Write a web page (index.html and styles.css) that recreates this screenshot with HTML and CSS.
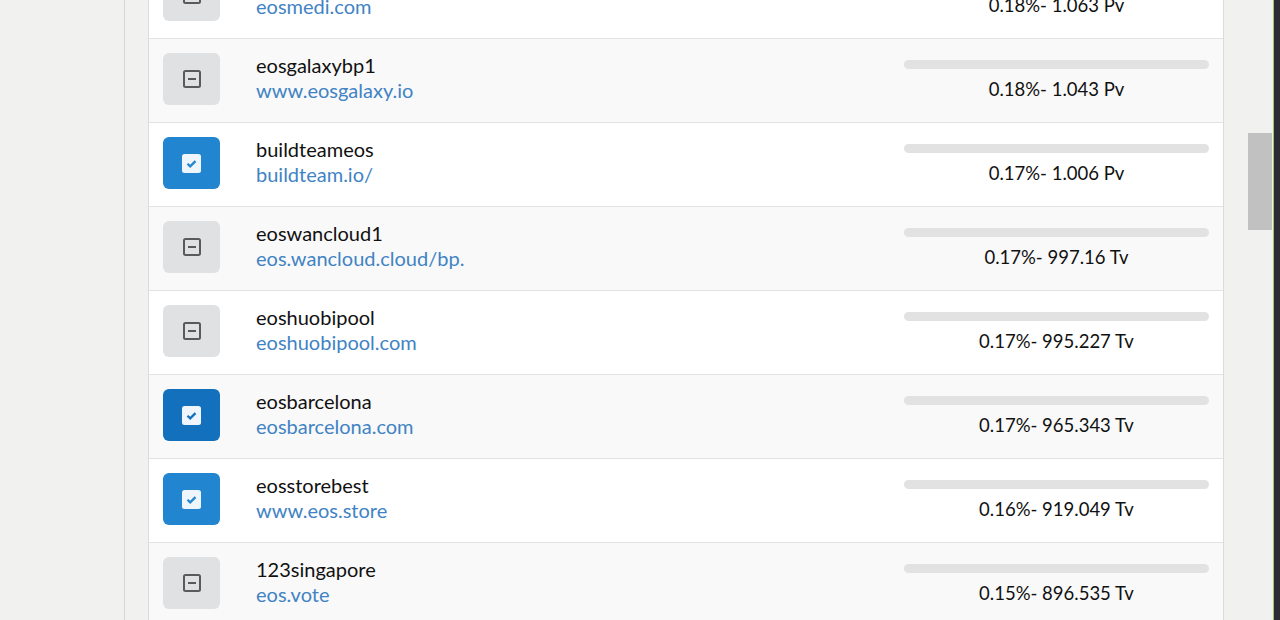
FILE: index.html
```html
<!DOCTYPE html>
<html lang="en">
<head>
  <meta charset="UTF-8">
  <title>Producers</title>
  <link rel="stylesheet" href="styles.css">
</head>
<body>

  <div class="sidebar"></div>

  <div class="main">
    <div class="table">
      <div class="row">
        <div class="cell-check"><div class="toggle off"><svg width="18" height="18" viewBox="0 0 18 18"><rect x="1" y="1" width="16" height="16" rx="1.5" fill="none" stroke="#5a5a5a" stroke-width="2"/><path d="M5 9h8" stroke="#5a5a5a" stroke-width="2"/></svg></div></div>
        <div class="cell-name"><div class="name">eosmedinodes</div><a class="url">eosmedi.com</a></div>
        <div class="cell-vote"><div class="bar"></div><div class="votes">0.18%- 1.063 Pv</div></div>
      </div>
      <div class="row">
        <div class="cell-check"><div class="toggle off"><svg width="18" height="18" viewBox="0 0 18 18"><rect x="1" y="1" width="16" height="16" rx="1.5" fill="none" stroke="#5a5a5a" stroke-width="2"/><path d="M5 9h8" stroke="#5a5a5a" stroke-width="2"/></svg></div></div>
        <div class="cell-name"><div class="name">eosgalaxybp1</div><a class="url">www.eosgalaxy.io</a></div>
        <div class="cell-vote"><div class="bar"></div><div class="votes">0.18%- 1.043 Pv</div></div>
      </div>
      <div class="row">
        <div class="cell-check"><div class="toggle on"><svg width="19" height="19" viewBox="0 0 19 19"><rect width="19" height="19" rx="2.5" fill="#eef5fc"/><path d="M5.5 9.8l2.7 2.6 5.3-5.3" stroke="#2185d0" stroke-width="2.2" fill="none"/></svg></div></div>
        <div class="cell-name"><div class="name">buildteameos</div><a class="url">buildteam.io/</a></div>
        <div class="cell-vote"><div class="bar"></div><div class="votes">0.17%- 1.006 Pv</div></div>
      </div>
      <div class="row">
        <div class="cell-check"><div class="toggle off"><svg width="18" height="18" viewBox="0 0 18 18"><rect x="1" y="1" width="16" height="16" rx="1.5" fill="none" stroke="#5a5a5a" stroke-width="2"/><path d="M5 9h8" stroke="#5a5a5a" stroke-width="2"/></svg></div></div>
        <div class="cell-name"><div class="name">eoswancloud1</div><a class="url">eos.wancloud.cloud/bp.</a></div>
        <div class="cell-vote"><div class="bar"></div><div class="votes">0.17%- 997.16 Tv</div></div>
      </div>
      <div class="row">
        <div class="cell-check"><div class="toggle off"><svg width="18" height="18" viewBox="0 0 18 18"><rect x="1" y="1" width="16" height="16" rx="1.5" fill="none" stroke="#5a5a5a" stroke-width="2"/><path d="M5 9h8" stroke="#5a5a5a" stroke-width="2"/></svg></div></div>
        <div class="cell-name"><div class="name">eoshuobipool</div><a class="url">eoshuobipool.com</a></div>
        <div class="cell-vote"><div class="bar"></div><div class="votes">0.17%- 995.227 Tv</div></div>
      </div>
      <div class="row">
        <div class="cell-check"><div class="toggle on hover"><svg width="19" height="19" viewBox="0 0 19 19"><rect width="19" height="19" rx="2.5" fill="#eef5fc"/><path d="M5.5 9.8l2.7 2.6 5.3-5.3" stroke="#1370bd" stroke-width="2.2" fill="none"/></svg></div></div>
        <div class="cell-name"><div class="name">eosbarcelona</div><a class="url">eosbarcelona.com</a></div>
        <div class="cell-vote"><div class="bar"></div><div class="votes">0.17%- 965.343 Tv</div></div>
      </div>
      <div class="row">
        <div class="cell-check"><div class="toggle on"><svg width="19" height="19" viewBox="0 0 19 19"><rect width="19" height="19" rx="2.5" fill="#eef5fc"/><path d="M5.5 9.8l2.7 2.6 5.3-5.3" stroke="#2185d0" stroke-width="2.2" fill="none"/></svg></div></div>
        <div class="cell-name"><div class="name">eosstorebest</div><a class="url">www.eos.store</a></div>
        <div class="cell-vote"><div class="bar"></div><div class="votes">0.16%- 919.049 Tv</div></div>
      </div>
      <div class="row">
        <div class="cell-check"><div class="toggle off"><svg width="18" height="18" viewBox="0 0 18 18"><rect x="1" y="1" width="16" height="16" rx="1.5" fill="none" stroke="#5a5a5a" stroke-width="2"/><path d="M5 9h8" stroke="#5a5a5a" stroke-width="2"/></svg></div></div>
        <div class="cell-name"><div class="name">123singapore</div><a class="url">eos.vote</a></div>
        <div class="cell-vote"><div class="bar"></div><div class="votes">0.15%- 896.535 Tv</div></div>
      </div>
    </div>
  </div>

  <div class="scrollbar"><div class="thumb"></div></div>
  <div class="edge"></div>

</body>
</html>
```

FILE: styles.css
```css
body {
  font-family: 'Lato', 'Open Sans', sans-serif;
  background-color: #f1f1f0;
  margin: 0;
  padding: 0;
  display: flex;
  height: 620px;
  overflow: hidden;
}

.sidebar {
  flex: none;
  width: 124px;
  border-right: 1px solid #d6d6d6;
}

.main {
  flex: 1;
  padding: 0 23px;
}

.table {
  margin-top: -46px;
  background-color: #fff;
  border-left: 1px solid #dcdcdc;
  border-right: 1px solid #dcdcdc;
}

.row {
  display: flex;
  align-items: center;
  height: 83px;
  border-top: 1px solid #e3e3e3;
}

.row:nth-child(even) {
  background-color: #f9f9f9;
}

.cell-check {
  flex: none;
  width: 107px;
  padding-left: 14px;
  box-sizing: border-box;
}

.toggle {
  width: 57px;
  height: 52px;
  margin-bottom: 3px;
  border-radius: 6px;
  display: flex;
  justify-content: center;
  align-items: center;
}

.toggle.off {
  background-color: #e0e1e2;
}

.toggle.on {
  background-color: #2185d0;
}

.toggle.hover {
  background-color: #1370bd;
}

.cell-name {
  flex: 1;
  font-size: 20px;
  line-height: 25px;
  margin-bottom: 5px;
}

.name {
  color: #111;
}

.url {
  color: #4183c4;
  text-decoration: none;
}

.cell-vote {
  flex: none;
  align-self: flex-start;
  width: 333px;
  padding: 21px 14px 0;
  box-sizing: border-box;
}

.bar {
  height: 9px;
  border-radius: 5px;
  background-color: #e2e2e2;
}

.votes {
  margin-top: 9px;
  text-align: center;
  font-size: 18.5px;
  line-height: 22px;
  color: #111;
}

/* fake window scrollbar */
.scrollbar {
  flex: none;
  width: 26px;
}

.thumb {
  margin: 133px 0 0 1px;
  width: 24px;
  height: 97px;
  background-color: #c1c1c1;
}

.edge {
  flex: none;
  width: 6px;
  border-left: 1px solid #9dc46c;
  background-color: #2b2d33;
}
```
